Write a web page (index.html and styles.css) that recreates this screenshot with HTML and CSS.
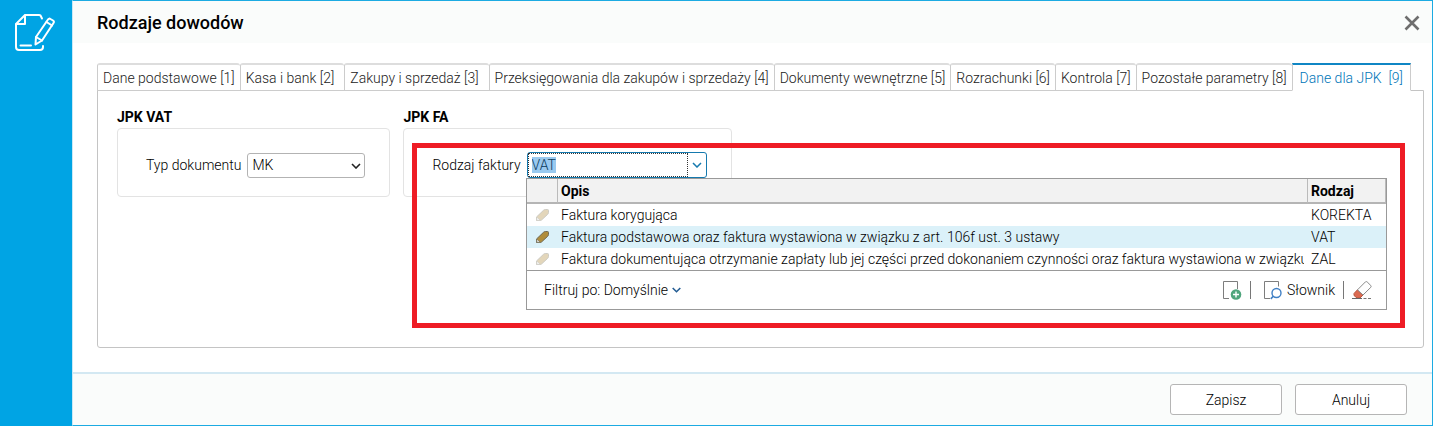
FILE: index.html
```html
<!DOCTYPE html>
<html lang="pl">
<head>
  <meta charset="UTF-8">
  <meta name="viewport" content="width=device-width, initial-scale=1.0">
  <title>Rodzaje dowodów</title>
  <link rel="stylesheet" href="styles.css">
</head>
<body>
  <aside class="sidebar">
    <svg width="42" height="40" viewBox="0 0 42 40" fill="none" stroke="#fff" stroke-width="2" stroke-linejoin="round" stroke-linecap="round">
      <path d="M28 5.5 L26.5 2.5 Q26 2 25 2 H11 L2 11 V34 Q2 37 5 37 H26 Q29 37 29 34 V33"/>
      <path d="M11 2.5 V11 H2.5"/>
      <path d="M6.500 32.500 H17" />
      <path d="M22 24 L34 6.500 Q35 5 36.500 6 L39 7.500 Q40.500 8.500 39.500 10 L28 27.500 L21.500 31.500 Z"/>
      <path d="M22 24 L28 27.500 M32.500 9 L38 12.500"/>
    </svg>
  </aside>

  <main class="dialog">
    <header class="dialog-header">
      <h1>Rodzaje dowodów</h1>
      <button type="button" class="close-btn" aria-label="Zamknij">
        <svg width="16" height="16" viewBox="0 0 16 16" stroke="#6e6e6e" stroke-width="2.600"><path d="M1.500 1.500 L14.500 14.500 M14.500 1.500 L1.500 14.500"/></svg>
      </button>
    </header>

    <div class="dialog-body">
      <nav class="tabs">
        <button type="button" class="tab">Dane podstawowe [1]</button>
        <button type="button" class="tab tab-wide">Kasa i bank [2]</button>
        <button type="button" class="tab tab-wide">Zakupy i sprzedaż [3]</button>
        <button type="button" class="tab">Przeksięgowania dla zakupów i sprzedaży [4]</button>
        <button type="button" class="tab">Dokumenty wewnętrzne [5]</button>
        <button type="button" class="tab">Rozrachunki [6]</button>
        <button type="button" class="tab">Kontrola [7]</button>
        <button type="button" class="tab">Pozostałe parametry [8]</button>
        <button type="button" class="tab active">Dane dla JPK&nbsp; [9]</button>
      </nav>

      <div class="panel">
        <section class="group">
          <h2>JPK VAT</h2>
          <div class="group-box">
            <label for="docType">Typ dokumentu</label>
            <span class="select-wrap">
              <select id="docType" class="select">
                <option>MK</option>
              </select>
              <svg class="arrow" width="10" height="6" viewBox="0 0 10 6" fill="none" stroke="#222" stroke-width="1.600"><path d="M1 1 L5 5 L9 1"/></svg>
            </span>
          </div>
        </section>

        <section class="group">
          <h2>JPK FA</h2>
          <div class="group-box">
            <label for="invoiceType">Rodzaj faktury</label>
            <span class="combo">
              <input type="text" id="invoiceType" value="VAT" autocomplete="off" spellcheck="false">
              <button type="button" class="combo-btn" aria-label="Rozwiń">
                <svg width="10" height="6" viewBox="0 0 10 6" fill="none" stroke="#1579ae" stroke-width="1.500"><path d="M1 1 L5 5 L9 1"/></svg>
              </button>
            </span>
          </div>
        </section>

        <div class="popup">
          <table>
            <thead>
              <tr><th class="col-icon"></th><th>Opis</th><th class="col-type">Rodzaj</th></tr>
            </thead>
            <tbody>
              <tr>
                <td class="col-icon"><svg class="pencil" width="13" height="12" viewBox="0 0 13 12"><use href="#pencil"/></svg></td>
                <td><span class="desc">Faktura korygująca</span></td>
                <td>KOREKTA</td>
              </tr>
              <tr class="selected">
                <td class="col-icon"><svg class="pencil" width="13" height="12" viewBox="0 0 13 12"><use href="#pencil"/></svg></td>
                <td><span class="desc">Faktura podstawowa oraz faktura wystawiona w związku z art. 106f ust. 3 ustawy</span></td>
                <td>VAT</td>
              </tr>
              <tr>
                <td class="col-icon"><svg class="pencil" width="13" height="12" viewBox="0 0 13 12"><use href="#pencil"/></svg></td>
                <td><span class="desc">Faktura dokumentująca otrzymanie zapłaty lub jej części przed dokonaniem czynności oraz faktura wystawiona w związku</span></td>
                <td>ZAL</td>
              </tr>
            </tbody>
          </table>
          <div class="popup-footer">
            <button type="button" class="filter-btn">
              Filtruj po: Domyślnie
              <svg width="9" height="6" viewBox="0 0 9 6" fill="none" stroke="#235c93" stroke-width="1.600"><path d="M0.700 1 L4.500 4.700 L8.300 1"/></svg>
            </button>
            <div class="tools">
              <button type="button" aria-label="Dodaj">
                <svg width="20" height="20" viewBox="0 0 20 20" fill="none">
                  <path d="M7 18.500 H1.500 V1.500 H15.500 V9" stroke="#7d7d7d"/>
                  <circle cx="14" cy="14.500" r="5.300" fill="#4fa57c"/>
                  <path d="M11 14.500 H17 M14 11.500 V17.500" stroke="#fff" stroke-width="1.400"/>
                </svg>
              </button>
              <span class="divider"></span>
              <button type="button" class="dict-btn">
                <svg width="20" height="20" viewBox="0 0 20 20" fill="none">
                  <path d="M7 18.500 H1.500 V1.500 H15.500 V6.500" stroke="#7d7d7d"/>
                  <circle cx="13.500" cy="13" r="4.500" stroke="#3f7fc4" stroke-width="1.400"/>
                  <path d="M10.300 16.200 L7.800 18.900" stroke="#3f7fc4" stroke-width="1.600"/>
                </svg>
                Słownik
              </button>
              <span class="divider"></span>
              <button type="button" aria-label="Wyczyść">
                <svg width="20" height="20" viewBox="0 0 20 20" fill="none">
                  <path d="M2 13.500 L5.500 9.800 L11 15 L8 18 H5 L2 15.500 Z" fill="#dc6b52" stroke="#b9553f"/>
                  <path d="M5.500 9.800 L13.500 1.800 Q14.300 1.200 15.200 2 L18.800 5.500 Q19.500 6.500 18.800 7.300 L11 15 Z" fill="#fff" stroke="#8a8a8a"/>
                  <path d="M0 18.500 H10" stroke="#666"/>
                  <path d="M11.500 18.500 H20" stroke="#777" stroke-dasharray="3 1.500"/>
                </svg>
              </button>
            </div>
          </div>
        </div>

        <div class="highlight"></div>
      </div>
    </div>

    <footer class="dialog-footer">
      <button type="button" class="btn">Zapisz</button>
      <button type="button" class="btn">Anuluj</button>
    </footer>
  </main>

  <svg width="0" height="0" class="defs">
    <symbol id="pencil" viewBox="0 0 13 12">
      <path d="M0.500 11.500 V8 L7.500 1.300 Q8.300 0.500 9.300 0.500 H11.500 Q12.500 0.500 12.500 1.500 V3.500 Q12.500 4.500 11.700 5.300 L5.500 11 L4.500 11.500 Z" fill="#b08d3c" stroke="#6f6a55"/>
      <path d="M0.800 11.200 V8.200 L4.300 11.200 Z" fill="#fff" stroke="#6f6a55" stroke-width="0.600"/>
    </symbol>
  </svg>

  <script>
    // Open with the current value selected
    const invoiceType = document.getElementById('invoiceType');
    invoiceType.focus();
    invoiceType.select();
  </script>
</body>
</html>
```
FILE: styles.css
```css
* {
  margin: 0;
  padding: 0;
  box-sizing: border-box;
}

body {
  font-family: Roboto, Arial, sans-serif;
  font-size: 14px;
  font-weight: 300;
  line-height: 16px;
  color: #000;
  background: #fff;
  min-height: 100vh;
  display: flex;
}

button,
input,
select {
  font: inherit;
  color: inherit;
}

button {
  background: none;
  border: none;
  cursor: pointer;
}

svg {
  display: block;
  flex: none;
}

.defs {
  position: absolute;
}

.sidebar {
  width: 72px;
  flex: none;
  background: #00a4e4;
  padding: 13px 14px;
}

.dialog {
  flex: 1;
  min-width: 0;
  display: flex;
  flex-direction: column;
  border: 1px solid #1cabe2;
  border-left-color: #c9e8f5;
}

.dialog-header {
  height: 42px;
  background: #fafcfb;
  display: flex;
  align-items: center;
  justify-content: space-between;
  padding: 2px 12px 0 24px;
}

.dialog-header h1 {
  font-size: 18px;
  line-height: 22px;
  font-weight: 500;
}

.dialog-body {
  flex: 1;
  display: flex;
  flex-direction: column;
  padding: 20px 8px 24px 24px;
}

.tabs {
  position: relative;
  z-index: 1;
  display: flex;
  padding-right: 12px;
}

.tab {
  height: 28px;
  padding: 0 5px;
  border: 1px solid #ccc;
  border-top: 2px solid #ddd;
  border-right: none;
  border-radius: 3px 3px 0 0;
  background: #fff;
  color: #222;
  white-space: nowrap;
}

.tab-wide {
  padding-right: 10px;
}

.tab.active {
  border-top-color: #0f86c4;
  border-right: 1px solid #ccc;
  border-bottom-color: #fff;
  border-radius: 0;
  color: #0076b8;
  padding: 0 7px;
}

.panel {
  flex: 1;
  position: relative;
  margin-top: -1px;
  border: 1px solid #c4c4c4;
  border-radius: 0 0 3px 3px;
  padding: 18px 19px;
  display: flex;
  align-items: flex-start;
  gap: 13px;
}

.group h2 {
  font-size: 14px;
  line-height: 16px;
  font-weight: 700;
  margin-bottom: 3px;
}

.group-box {
  height: 69px;
  display: flex;
  align-items: center;
  gap: 6px;
  padding: 5px 24px 0 28px;
  border: 1px solid #e3e3e3;
  border-radius: 4px;
}

.select-wrap {
  display: flex;
  position: relative;
}

.select {
  appearance: none;
  width: 118px;
  height: 25px;
  padding: 0 20px 0 4px;
  border: 1px solid #b3b3b3;
  border-radius: 3px;
  background: #fff;
}

.arrow {
  position: absolute;
  right: 4px;
  top: 10px;
  pointer-events: none;
}

.combo {
  display: flex;
  width: 180px;
  height: 26px;
  border: 1px solid #1579ae;
  border-radius: 3px;
}

.combo input {
  flex: 1;
  min-width: 0;
  padding: 0 3px;
  border: 1px dotted #333;
  outline: none;
  background: #fff;
  color: #0b3a5c;
}

.combo input::selection {
  background: #99c9ef;
  color: #0b3a5c;
}

.combo-btn {
  width: 18px;
  display: flex;
  align-items: center;
  justify-content: center;
}

.popup {
  position: absolute;
  z-index: 2;
  top: 87px;
  left: 428px;
  right: 36px;
  background: #fff;
  border: 1px solid #999;
}

.popup table {
  width: 100%;
  table-layout: fixed;
  border-collapse: separate;
  border-spacing: 0;
}

.popup th {
  height: 25px;
  padding: 0 3px;
  background: #f2f2f2;
  border-right: 1px solid #bbb;
  border-bottom: 2px solid #b5b5b5;
  text-align: left;
  font-weight: 700;
}

.popup td {
  height: 22px;
  padding: 0 4px 0 3px;
  white-space: nowrap;
}

.popup tbody {
  line-height: 22px;
}

.popup .col-icon {
  width: 31px;
  padding-left: 9px;
}

.popup .col-type {
  width: 78px;
}

.desc {
  display: block;
  overflow: hidden;
}

.pencil {
  opacity: 0.35;
}

.selected {
  background: #dbf1f9;
}

.selected .pencil {
  opacity: 1;
}

.popup-footer {
  height: 39px;
  display: flex;
  align-items: center;
  justify-content: space-between;
  padding: 0 14px 0 17px;
  border-top: 1px solid #999;
}

.filter-btn,
.dict-btn {
  display: flex;
  align-items: center;
  gap: 4px;
}

.tools {
  display: flex;
  align-items: center;
  gap: 8px;
}

.divider {
  width: 1px;
  height: 18px;
  background: #777;
}

.dict-btn {
  padding-left: 4px;
}

/* marked area around the open list */
.highlight {
  position: absolute;
  z-index: 1;
  top: 52px;
  left: 314px;
  right: 18px;
  bottom: 19px;
  border: 5px solid #ee1c25;
  pointer-events: none;
}

.dialog-footer {
  display: flex;
  justify-content: flex-end;
  gap: 13px;
  padding: 10px 25px 10px 24px;
  background: #fafcfb;
  border-top: 2px solid #d3e8f2;
}

.btn {
  width: 112px;
  height: 31px;
  border: 1px solid #b5b5b5;
  border-radius: 3px;
  background: #fff;
}
```
